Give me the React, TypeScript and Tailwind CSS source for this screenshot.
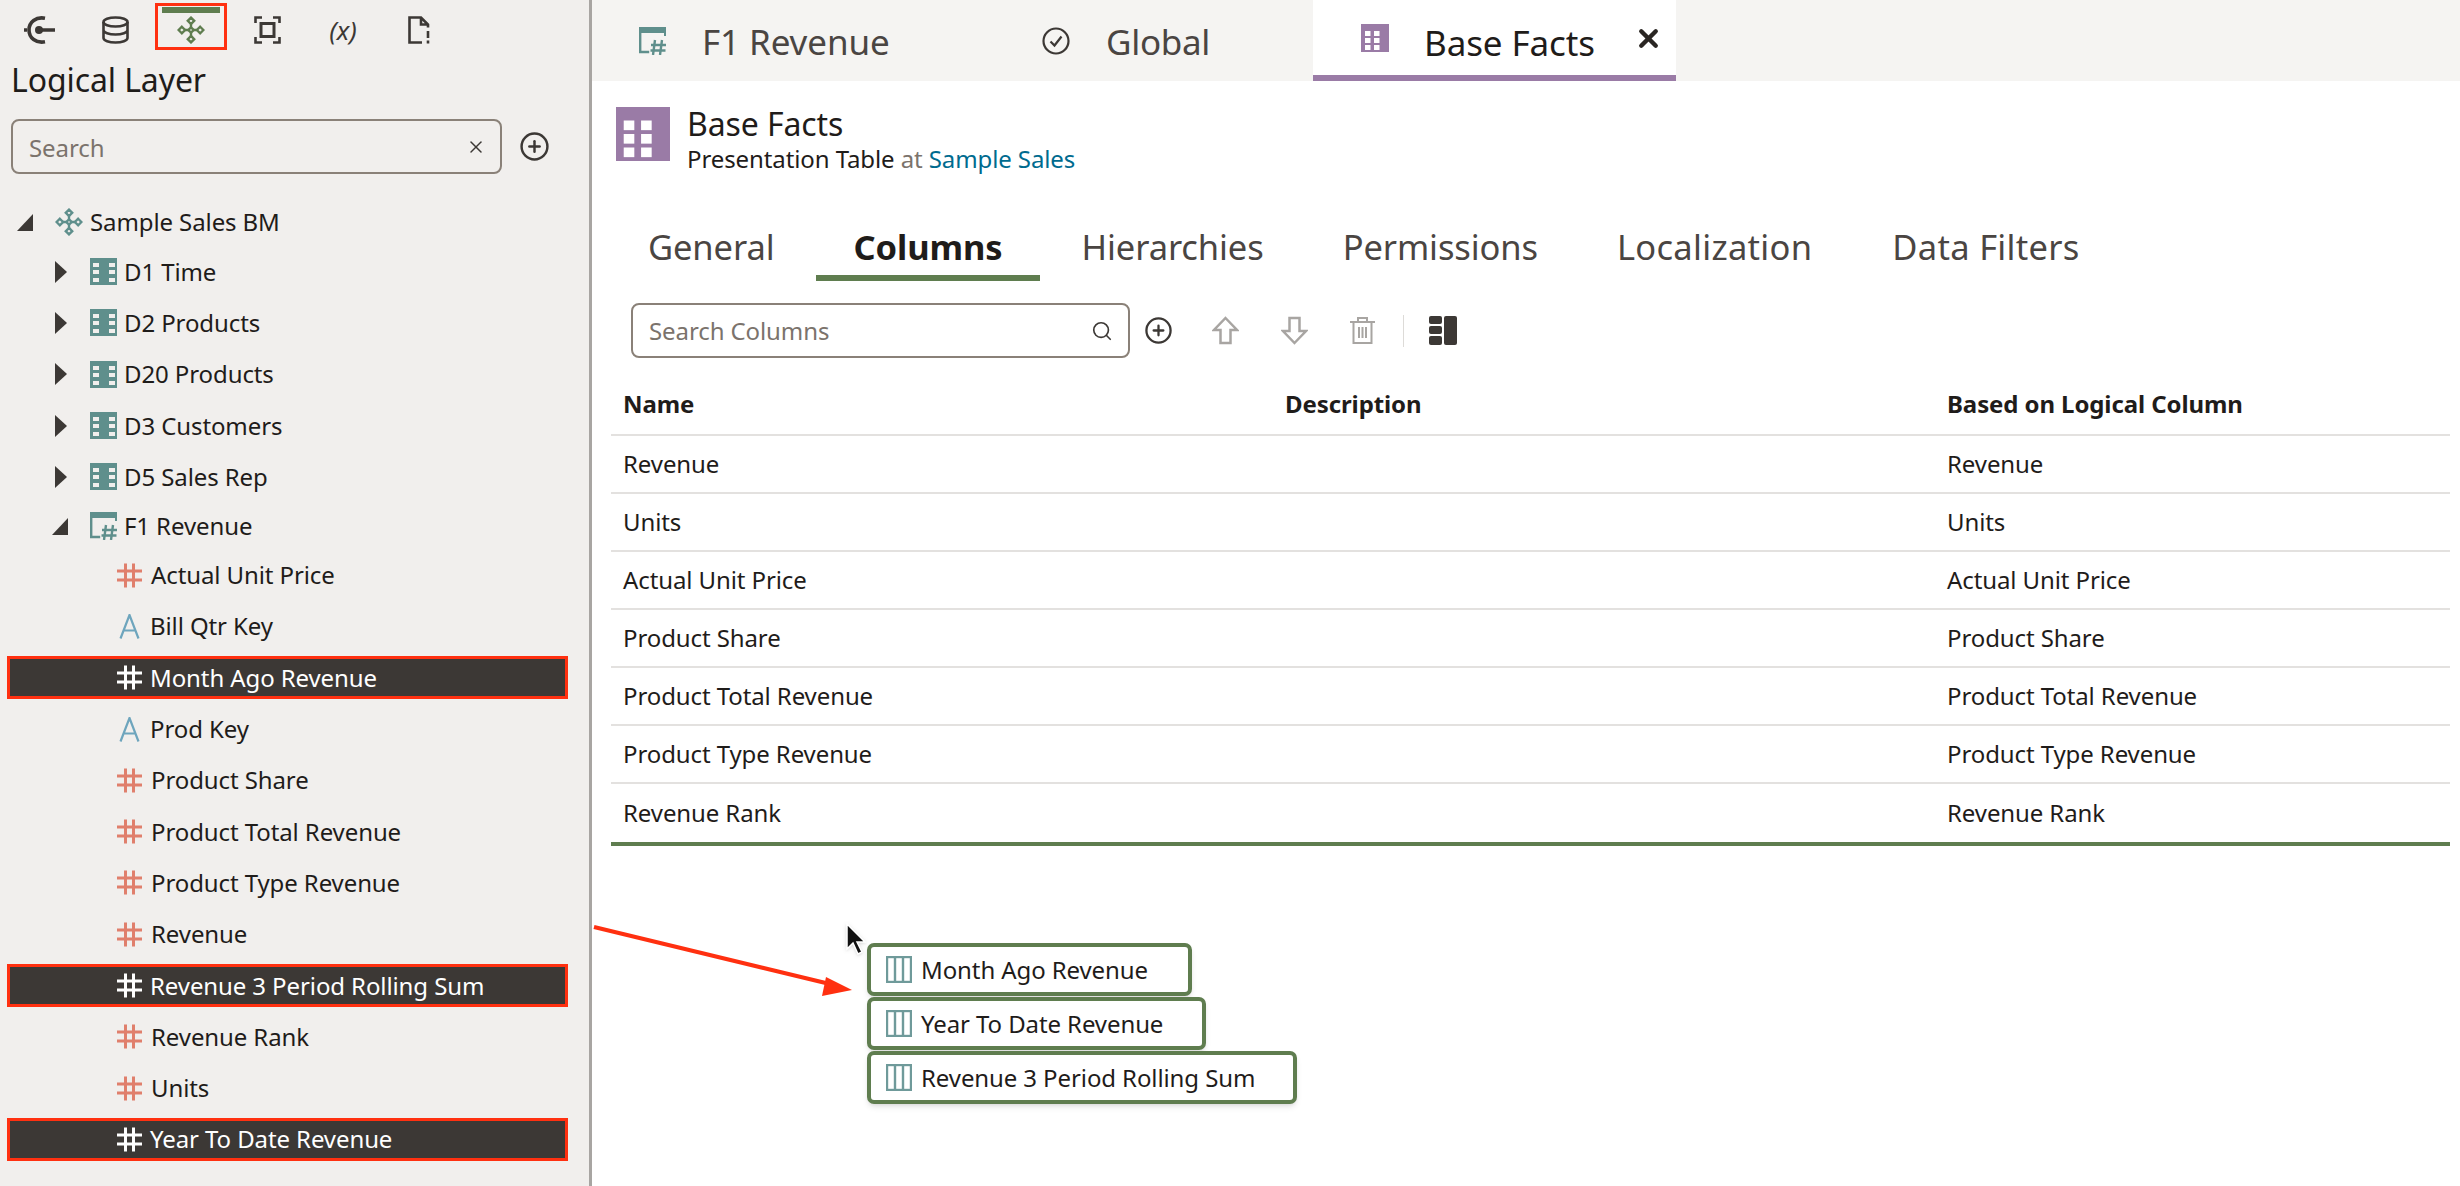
import { CirclePlus, Search, X } from "lucide-react";

const TEAL = "#5f8f8c";

function ModelIcon({ color, size = 28 }: { color: string; size?: number }) {
  return (
    <svg width={size} height={size} viewBox="0 0 26 26" fill="none" stroke={color} strokeWidth="2.200" className="shrink-0">
      <path d="M13 7v12M7 13h12" />
      <path d="M13 1.500l3 3-3 3-3-3zM13 18.500l3 3-3 3-3-3zM4.500 10l3 3-3 3-3-3zM21.500 10l3 3-3 3-3-3zM13 10.500l2.500 2.500-2.500 2.500-2.500-2.500z" fill="#f1efed" />
    </svg>
  );
}

function DimIcon() {
  return (
    <svg width="27" height="27" viewBox="0 0 27 27" className="shrink-0">
      <rect width="27" height="27" fill={TEAL} />
      <g fill="#f1efed">
        <rect x="3" y="5" width="6" height="4" />
        <rect x="3" y="12" width="6" height="4" />
        <rect x="3" y="20" width="6" height="4" />
        <rect x="19" y="5" width="6" height="4" />
        <rect x="19" y="12" width="6" height="4" />
        <rect x="19" y="20" width="6" height="4" />
      </g>
    </svg>
  );
}

function FactIcon() {
  return (
    <svg width="28" height="28" viewBox="0 0 28 28" fill="none" className="shrink-0">
      <rect x="0" y="0" width="27" height="6" fill={TEAL} />
      <path d="M26 6v3" stroke={TEAL} strokeWidth="2" />
      <path d="M1.200 6v19h9" stroke={TEAL} strokeWidth="2.400" />
      <path d="M16 13l-2 15M23 13l-2 15M12 18h15M11.500 23.500h15" stroke={TEAL} strokeWidth="2.400" />
    </svg>
  );
}

function HashIcon({ color }: { color: string }) {
  return (
    <svg width="25" height="25" viewBox="0 0 25 25" fill="none" stroke={color} strokeWidth="3" className="shrink-0">
      <path d="M8.500 0.500v24M16.500 0.500v24M0 8h25M0 17h25" />
    </svg>
  );
}

function AttrIcon() {
  return (
    <svg width="21" height="25" viewBox="0 0 21 25" fill="none" stroke="#6ea5bd" strokeWidth="2.200" className="shrink-0">
      <path d="M1.500 24.500L10.500 1l9 23.500M4.500 16.500h12" />
    </svg>
  );
}

function PurpleGrid({ w, h }: { w: number; h: number }) {
  return (
    <svg width={w} height={h} viewBox="0 0 28 28" className="shrink-0">
      <rect width="28" height="28" fill="#9a7ba6" />
      <g fill="#fff">
        <rect x="4" y="7" width="5.500" height="5" />
        <rect x="13" y="7" width="5.500" height="5" />
        <rect x="4" y="14" width="5.500" height="5" />
        <rect x="13" y="14" width="5.500" height="5" />
        <rect x="4" y="21" width="5.500" height="5" />
        <rect x="13" y="21" width="5.500" height="5" />
      </g>
    </svg>
  );
}

function Caret({ open }: { open: boolean }) {
  return open ? (
    <svg width="16" height="17" viewBox="0 0 16 17" className="shrink-0">
      <path d="M16 0v17H0z" fill="#3c3835" />
    </svg>
  ) : (
    <svg width="12" height="22" viewBox="0 0 12 22" className="shrink-0">
      <path d="M0 0l12 11L0 22z" fill="#3c3835" />
    </svg>
  );
}

function Toolbar() {
  const slot = "flex h-[47px] w-[76px] items-center justify-center pt-[6px]";
  return (
    <div className="flex h-[58px] items-start pl-[1px] pt-[3px] text-[#3c3835]">
      <div className={slot}>
        <svg width="31" height="28" viewBox="0 0 31 28" fill="none" stroke="currentColor" strokeWidth="3.600">
          <path d="M21 2.200C12 0.500 5 6 5 14s7 13.500 16 11.800" />
          <path d="M0 14h3M12 14h19" />
          <circle cx="15" cy="14" r="4" fill="currentColor" stroke="none" />
        </svg>
      </div>
      <div className={slot}>
        <svg width="27" height="28" viewBox="0 0 27 28" fill="none" stroke="currentColor" strokeWidth="2.600">
          <ellipse cx="13.500" cy="6" rx="12" ry="4.500" />
          <path d="M1.500 6v16c0 2.500 5.500 4.500 12 4.500s12-2 12-4.500V6M1.500 14c0 2.500 5.500 4.500 12 4.500s12-2 12-4.500" />
        </svg>
      </div>
      <div className="flex w-[76px] justify-center">
        <div className="relative flex h-[47px] w-[72px] items-center justify-center border-[3px] border-[#ff3010] pt-[7px]">
          <div className="absolute left-[4px] right-[4px] top-[1px] h-[6px] bg-[#5f7d4f]" />
          <ModelIcon color="#5f7d4f" />
        </div>
      </div>
      <div className={slot}>
        <svg width="27" height="28" viewBox="0 0 27 28" fill="none" stroke="currentColor" strokeWidth="2.600">
          <path d="M1.500 7V1.500H8M19 1.500h6.500V7M1.500 21v5.500H8M19 26.500h6.500V21" />
          <rect x="7" y="7.500" width="13" height="13" strokeWidth="3" />
        </svg>
      </div>
      <div className={slot + " text-[26px] italic leading-none"}>(x)</div>
      <div className={slot}>
        <svg width="22" height="28" viewBox="0 0 22 28" fill="none" stroke="currentColor" strokeWidth="2.600">
          <path d="M14 26.500H1.500V1.500H13l7 7v3M13 1.500v7h7M20 15v7M20 24.500v3" />
        </svg>
      </div>
    </div>
  );
}

const dims = ["D1 Time", "D2 Products", "D20 Products", "D3 Customers", "D5 Sales Rep"];
const cols = [
  { name: "Actual Unit Price", kind: "hash" },
  { name: "Bill Qtr Key", kind: "attr" },
  { name: "Month Ago Revenue", kind: "sel" },
  { name: "Prod Key", kind: "attr" },
  { name: "Product Share", kind: "hash" },
  { name: "Product Total Revenue", kind: "hash" },
  { name: "Product Type Revenue", kind: "hash" },
  { name: "Revenue", kind: "hash" },
  { name: "Revenue 3 Period Rolling Sum", kind: "sel" },
  { name: "Revenue Rank", kind: "hash" },
  { name: "Units", kind: "hash" },
  { name: "Year To Date Revenue", kind: "sel" },
];

function Sidebar() {
  return (
    <aside className="flex h-full w-[592px] shrink-0 flex-col border-r-[3px] border-[#a8a5a2] bg-[#f1efed]">
      <Toolbar />
      <h1 className="pl-[11px] text-[32px] leading-[44px] text-[#1f1c1a]">Logical Layer</h1>
      <div className="mt-[17px] flex items-center pl-[11px]">
        <div className="flex h-[55px] w-[491px] items-center justify-between rounded-[8px] border-2 border-[#8a8178] pl-[16px] pr-[14px]">
          <span className="pt-[2px] text-[#7b736c]">Search</span>
          <X size={20} strokeWidth={1.8} className="text-[#3c3835]" />
        </div>
        <CirclePlus size={31} strokeWidth={1.9} className="ml-[17px] text-[#3c3835]" />
      </div>
      <div className="mt-[24px] flex flex-col text-[#1f1c1a]">
        <div className="flex h-[48px] items-center pl-[17px]">
          <Caret open />
          <div className="ml-[22px]">
            <ModelIcon color={TEAL} />
          </div>
          <span className="ml-[7px]">Sample Sales BM</span>
        </div>
        {dims.map((d) => (
          <div key={d} className="flex h-[51.3px] items-center pl-[55px]">
            <Caret open={false} />
            <div className="ml-[23px]">
              <DimIcon />
            </div>
            <span className="ml-[7px]">{d}</span>
          </div>
        ))}
        <div className="flex h-[47px] items-center pl-[52px] pt-[1px]">
          <Caret open />
          <div className="ml-[22px]">
            <FactIcon />
          </div>
          <span className="ml-[6px]">F1 Revenue</span>
        </div>
        {cols.map((c) =>
          c.kind === "sel" ? (
            <div key={c.name} className="flex h-[51.3px] items-center pl-[7px]">
              <div className="flex h-[43px] w-[561px] items-center gap-[8px] border-[3px] border-[#ff3010] bg-[#3c3835] pl-[107px] text-white">
                <HashIcon color="#fff" />
                <span>{c.name}</span>
              </div>
            </div>
          ) : (
            <div key={c.name} className="flex h-[51.3px] items-center pl-[117px]">
              {c.kind === "hash" ? (
                <HashIcon color="#e07f6c" />
              ) : (
                <div className="ml-[2px] mr-[1px]">
                  <AttrIcon />
                </div>
              )}
              <span className="ml-[9px]">{c.name}</span>
            </div>
          )
        )}
      </div>
    </aside>
  );
}

const tableRows = [
  "Revenue",
  "Units",
  "Actual Unit Price",
  "Product Share",
  "Product Total Revenue",
  "Product Type Revenue",
  "Revenue Rank",
];
const subTabs = ["General", "Columns", "Hierarchies", "Permissions", "Localization", "Data Filters"];

function Main() {
  return (
    <main className="relative min-w-0 flex-1 bg-white">
      {/* Tabs de arriba */}
      <div className="flex h-[81px] bg-[#f5f4f2] text-[35px]">
        <div className="flex w-[432px] items-center pl-[47px] text-[#4a4542]">
          <FactIcon />
          <span className="ml-[35px] pt-[3px]">F1 Revenue</span>
        </div>
        <div className="flex w-[289px] items-center pl-[18px] text-[#4a4542]">
          <svg width="28" height="28" viewBox="0 0 28 28" fill="none" stroke="#3c3835" strokeWidth="2.200" className="shrink-0">
            <circle cx="14" cy="14" r="12.500" />
            <path d="M8.500 14.500l4 4 7-9" />
          </svg>
          <span className="ml-[36px] pt-[3px] tracking-[-0.3px]">Global</span>
        </div>
        <div className="flex w-[363px] items-center border-b-[6px] border-[#9a7ba6] bg-white pl-[48px] pt-[1px] text-[#1f1c1a]">
          <PurpleGrid w={28} h={28} />
          <span className="ml-[35px] pt-[9px]">Base Facts</span>
          <X size={29} strokeWidth={3.6} className="ml-[39px] text-[#2a2623]" />
        </div>
      </div>

      <div className="flex gap-[17px] pl-[24px] pt-[26px]">
        <PurpleGrid w={54} h={54} />
        <div>
          <div className="text-[32px] leading-[34px] text-[#1f1c1a]">Base Facts</div>
          <div className="text-[24px] leading-[36px] text-[#1f1c1a]">
            Presentation Table <span className="text-[#7b736c]">at</span>{" "}
            <span className="text-[#006b8f]">Sample Sales</span>
          </div>
        </div>
      </div>

      <div className="ml-[19px] mt-[39px] flex h-[65px] items-stretch gap-[5px] text-[34.500px] text-[#4a4542]">
        {subTabs.map((t) =>
          t === "Columns" ? (
            <div key={t} className="flex items-center border-b-[6px] border-[#5f7d4f] px-[37px] pt-[2px] font-bold text-[#1f1c1a]">
              {t}
            </div>
          ) : (
            <div
              key={t}
              className={
                "flex items-center px-[37px] pb-[3px] " +
                (t === "Data Filters" ? "ml-[1px] tracking-[0.3px]" : t === "Localization" ? "tracking-[0.3px]" : "")
              }
            >
              {t}
            </div>
          )
        )}
      </div>

      <div className="ml-[39px] mt-[22px] flex items-center">
        <div className="flex h-[55px] w-[499px] items-center justify-between rounded-[8px] border-2 border-[#8a8178] pl-[16px] pr-[15px]">
          <span className="text-[#7b736c]">Search Columns</span>
          <Search size={22} strokeWidth={1.8} className="text-[#3c3835]" />
        </div>
        <CirclePlus size={29} strokeWidth={1.9} className="ml-[14px] text-[#3c3835]" />
        <svg width="27" height="29" viewBox="0 0 27 29" fill="none" stroke="#a8a5a2" strokeWidth="2.500" className="ml-[39px]">
          <path d="M13.500 2L25 14h-6.500v13h-10V14H2z" />
        </svg>
        <svg width="27" height="29" viewBox="0 0 27 29" fill="none" stroke="#a8a5a2" strokeWidth="2.500" className="ml-[42px]">
          <path d="M13.500 27L25 15h-6.500V2h-10v13H2z" />
        </svg>
        <svg width="27" height="29" viewBox="0 0 27 29" fill="none" stroke="#a8a5a2" strokeWidth="2" className="ml-[41px]">
          <path d="M1 6h25M9 6V2h9v4M4.500 6v21h18V6M10 11v11M13.500 11v11M17 11v11" />
        </svg>
        <div className="ml-[27px] h-[32px] w-px bg-[#dddbd8]" />
        <svg width="28" height="29" viewBox="0 0 28 29" fill="#3c3835" className="ml-[25px]">
          <rect x="0" y="0" width="13" height="8" rx="2" />
          <rect x="0" y="10" width="13" height="8" rx="2" />
          <rect x="0" y="20" width="13" height="9" rx="2" />
          <rect x="15" y="0" width="13" height="29" rx="2" />
        </svg>
      </div>

      {/* Tabla */}
      <div className="ml-[19px] mr-[10px] mt-[16px] border-b-[4px] border-[#5f7d4f] text-[#1f1c1a]">
        <div className="grid h-[62px] grid-cols-[662px_662px_1fr] items-center border-b-2 border-[#e3e1df] pl-[12px] font-bold">
          <span>Name</span>
          <span>Description</span>
          <span>Based on Logical Column</span>
        </div>
        {tableRows.map((r, i) => (
          <div
            key={r}
            className={"grid h-[58px] grid-cols-[662px_662px_1fr] items-center pl-[12px] " + (i < tableRows.length - 1 ? "border-b-2 border-[#e3e1df]" : "")}
          >
            <span>{r}</span>
            <span />
            <span>{r}</span>
          </div>
        ))}
      </div>

      {/* Flecha y cursor sobre el contenido */}
      <svg className="pointer-events-none absolute left-0 top-[920px]" width="280" height="80" viewBox="0 0 280 80" fill="none">
        <path d="M2 7l240 58" stroke="#ff3010" strokeWidth="4" />
        <path d="M260 70l-26-13-4 19z" fill="#ff3010" />
      </svg>
      <svg className="absolute left-[253px] top-[923px] drop-shadow" width="22" height="32" viewBox="0 0 22 32">
        <path d="M2 1v25l6-6 5 11 4-2-5-10h8z" fill="#111" stroke="#fff" strokeWidth="1.500" />
      </svg>

      {/* Chips arrastrados */}
      <div className="absolute left-[275px] top-[943px] flex flex-col items-start gap-px">
        {[
          { name: "Month Ago Revenue", w: "w-[325px]" },
          { name: "Year To Date Revenue", w: "w-[339px]" },
          { name: "Revenue 3 Period Rolling Sum", w: "w-[430px]" },
        ].map((c) => (
          <div
            key={c.name}
            className={"flex h-[53px] items-center gap-[9px] rounded-[7px] border-[4px] border-[#5f7d4f] bg-white pl-[15px] text-[#1f1c1a] shadow-md " + c.w}
          >
            <svg width="26" height="27" viewBox="0 0 26 27" fill="none" stroke="#6f9a9a" strokeWidth="2.400" className="shrink-0">
              <rect x="1" y="1" width="24" height="25" />
              <path d="M9 1v25M17 1v25" />
            </svg>
            <span>{c.name}</span>
          </div>
        ))}
      </div>
    </main>
  );
}

export default function App() {
  return (
    <div className="flex h-[1186px] w-[2460px] overflow-hidden bg-white font-['Noto_Sans',sans-serif] text-[24px] leading-[32px] tracking-[-0.1px]">
      <Sidebar />
      <Main />
    </div>
  );
}
